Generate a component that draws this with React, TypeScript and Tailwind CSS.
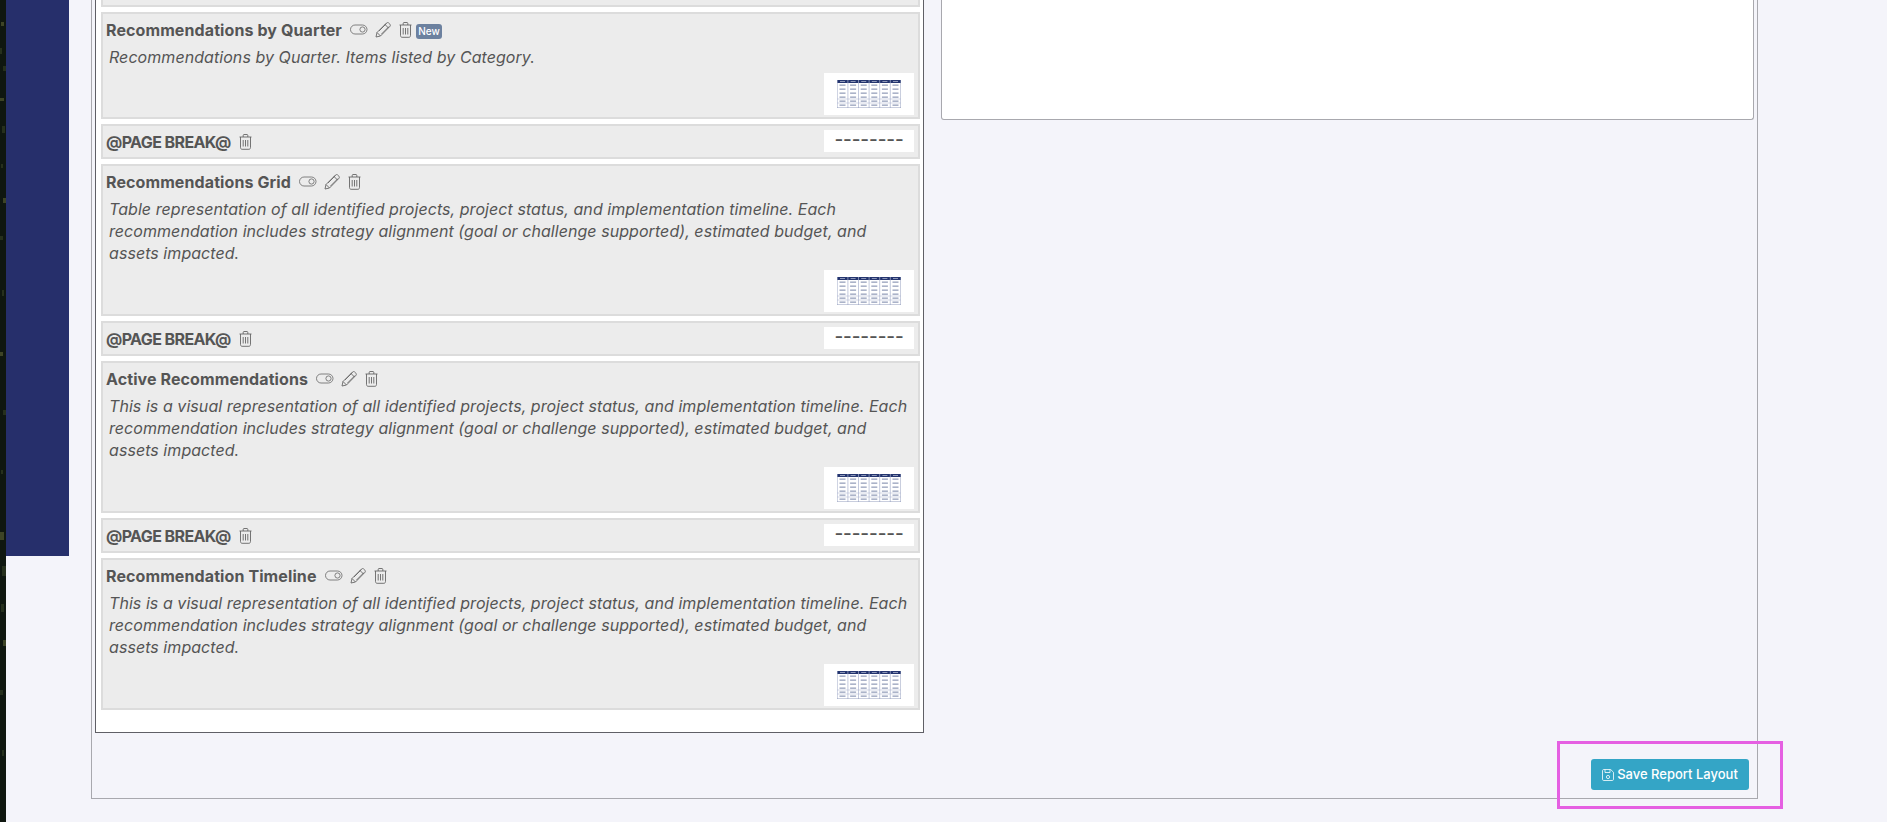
import React from "react";

const font = "font-['Inter','Liberation_Sans',sans-serif]";

function ToggleIcon() {
  return (
    <svg width="18" height="11" viewBox="0 0 18 11" fill="none" stroke="#666" strokeWidth="0.8">
      <rect x="0.5" y="1" width="16.5" height="9" rx="4.5" />
      <circle cx="12.5" cy="5.5" r="2.6" />
    </svg>
  );
}

function PencilIcon() {
  return (
    <svg width="16" height="16" viewBox="0 0 16 16" fill="none" stroke="#666" strokeWidth="0.9" strokeLinejoin="round">
      <path d="M1 15l1-4.5L11.5 1c.7-.6 1.6-.6 2.2 0l1.2 1.2c.6.6.6 1.5 0 2.2L5.5 14 1 15z" />
      <path d="M2 10.5l3.5 3.5M10 2.5l3.5 3.5M4 9l7.5-7.5M6.5 12l7.5-7.5" />
    </svg>
  );
}

function TrashIcon() {
  return (
    <svg width="13" height="16" viewBox="0 0 13 16" fill="none" stroke="#666" strokeWidth="0.9">
      <path d="M0.5 3h12M4.2 3V1.4c0-.5.3-.9.8-.9h3c.5 0 .8.4.8.9V3" />
      <path d="M1.5 3v10.6c0 1 .7 1.7 1.6 1.7h6.8c.9 0 1.6-.7 1.6-1.7V3" />
      <path d="M4.2 6v6.5M6.5 6v6.5M8.8 6v6.5" />
    </svg>
  );
}

function SaveIcon() {
  return (
    <svg width="12" height="12" viewBox="0 0 12 12" fill="none" stroke="#fff" strokeWidth="0.8">
      <path d="M1.5 0.5h7.2L11.5 3.3v7c0 .7-.5 1.2-1.2 1.2H1.7c-.7 0-1.2-.5-1.2-1.2V1.7c0-.7.5-1.2 1-1.2z" />
      <path d="M3 .5v3h5v-3" />
      <circle cx="6" cy="8" r="1.6" />
    </svg>
  );
}

function TableThumb() {
  const cols = [0, 1, 2, 3, 4, 5];
  const rows = [0, 1, 2, 3, 4, 5];
  return (
    <svg width="64" height="28" viewBox="0 0 64 28">
      <rect width="64" height="28" fill="#fff" />
      <rect width="64" height="3" fill="#24356f" />
      {cols.map((c) => (
        <g key={c}>
          <rect x={c * 10.6 + 3} y="1" width="5" height="1" fill="#8d97b8" />
          <line x1={c * 10.6 + 0.3} y1="0" x2={c * 10.6 + 0.3} y2="28" stroke="#a9b2cd" strokeWidth="0.7" />
          {rows.map((r) => (
            <rect key={r} x={c * 10.6 + 2.5} y={r * 4 + 4.5} width="6" height="1.3" fill="#97a1bc" />
          ))}
        </g>
      ))}
      <line x1="63.7" y1="0" x2="63.7" y2="28" stroke="#8f9abb" strokeWidth="0.6" />
      <line x1="0" y1="19" x2="64" y2="19" stroke="#a9b2cd" strokeWidth="0.5" />
      <line x1="0" y1="23" x2="64" y2="23" stroke="#a9b2cd" strokeWidth="0.5" />
      <line x1="0" y1="27.7" x2="64" y2="27.7" stroke="#8f9abb" strokeWidth="0.6" />
    </svg>
  );
}

// bit of the desktop photo that shows down the left edge
function PhotoStrip() {
  const specks = [
    [1, 22, 3, 4], [0, 48, 2, 6], [3, 66, 3, 5], [0, 98, 4, 3], [2, 126, 3, 7], [1, 164, 2, 4],
    [3, 198, 3, 5], [0, 236, 3, 4], [2, 290, 2, 6], [0, 352, 3, 4], [3, 410, 3, 5], [1, 470, 2, 4],
    [0, 532, 4, 8], [2, 566, 4, 10], [1, 604, 3, 8], [3, 640, 3, 6], [0, 690, 3, 5], [2, 750, 2, 6],
  ];
  return (
    <svg width="6" height="822" viewBox="0 0 6 822" className="shrink-0">
      <rect width="6" height="822" fill="#0f1710" />
      {specks.map(([x, y, w, h], i) => (
        <rect key={i} x={x} y={y} width={w} height={h} fill={i % 3 === 0 ? "#3d4426" : "#26301d"} />
      ))}
    </svg>
  );
}

type CardProps = {
  title: string;
  text: string;
  isNew?: boolean;
  height: string;
};

function ReportCard({ title, text, isNew, height }: CardProps) {
  return (
    <div className={`${height} flex shrink-0 flex-col border-2 border-[#dcdcdc] bg-[#ececec] pl-[3px] pr-[4px]`}>
      <div className="mt-[6px] flex h-[19px] items-center">
        <span className="text-[16px] font-bold tracking-[0.1px] text-[#555555]">{title}</span>
        <span className="ml-[8px] mr-[7px]"><ToggleIcon /></span>
        <PencilIcon />
        <span className="ml-[8px]"><TrashIcon /></span>
        {isNew && (
          <span className="ml-[4px] mt-[3px] flex h-[15px] w-[26px] items-center justify-center rounded-[3px] bg-[#6c819f] text-[10px] font-medium text-white">
            New
          </span>
        )}
      </div>
      <p className="ml-[3px] mt-[7px] w-[800px] text-[16px] leading-[22.2px] tracking-[0.06px] italic text-[#555555]">{text}</p>
      <div className="mb-[2px] mt-auto flex justify-end">
        <div className="flex h-[42px] w-[90px] items-center justify-center bg-white">
          <TableThumb />
        </div>
      </div>
    </div>
  );
}

function PageBreak() {
  return (
    <div className="flex h-[35px] shrink-0 items-center border-2 border-[#dcdcdc] bg-[#ececec] pl-[3px] pr-[4px]">
      <span className="text-[16px] font-bold tracking-[-0.6px] text-[#555555]">@PAGE BREAK@</span>
      <span className="ml-[8px]"><TrashIcon /></span>
      <div className="mb-[2px] ml-auto flex h-[22px] w-[90px] items-center justify-center bg-white text-[19px] font-medium tracking-[-0.15px] text-[#555555]">
        --------
      </div>
    </div>
  );
}

const longText =
  "This is a visual representation of all identified projects, project status, and implementation timeline. Each recommendation includes strategy alignment (goal or challenge supported), estimated budget, and assets impacted.";

export default function App() {
  return (
    <div className={`${font} relative flex h-[822px] overflow-hidden bg-[#f4f4fa]`}>
      <PhotoStrip />
      <div className="h-[556px] w-[63px] shrink-0 bg-[#262f6b]" />
      <main className="ml-[22px] flex h-[799px] w-[1667px] shrink-0 flex-col justify-between border-x border-b border-[#a8a8ae]">
        <div className="flex items-start pl-[3px]">
          <div className="flex h-[733px] w-[829px] shrink-0 flex-col gap-[5px] border-x border-b border-[#5f5f66] bg-white pl-[5px] pr-[3px]">
            <div className="h-[7px] shrink-0 border-x-2 border-b-2 border-[#dcdcdc] bg-[#ececec]" />
            <ReportCard
              title="Recommendations by Quarter"
              text="Recommendations by Quarter. Items listed by Category."
              isNew
              height="h-[107px]"
            />
            <PageBreak />
            <ReportCard
              title="Recommendations Grid"
              text="Table representation of all identified projects, project status, and implementation timeline. Each recommendation includes strategy alignment (goal or challenge supported), estimated budget, and assets impacted."
              height="h-[152px]"
            />
            <PageBreak />
            <ReportCard title="Active Recommendations" text={longText} height="h-[152px]" />
            <PageBreak />
            <ReportCard title="Recommendation Timeline" text={longText} height="h-[152px]" />
          </div>
          <div className="ml-[17px] h-[120px] w-[813px] rounded-b-[3px] border-x border-b border-[#a8a8ae] bg-white" />
        </div>
        <div className="mb-[8px] mr-[8px] flex justify-end">
          <button className="flex h-[31px] w-[158px] items-center justify-center gap-[3px] rounded-[3px] bg-[#34a5c6] text-[13px] font-medium text-white">
            <SaveIcon />
            Save Report Layout
          </button>
        </div>
      </main>
      <div className="absolute left-[1557px] top-[741px] h-[68px] w-[226px] border-[3px] border-[#e55fe2]" />
    </div>
  );
}
